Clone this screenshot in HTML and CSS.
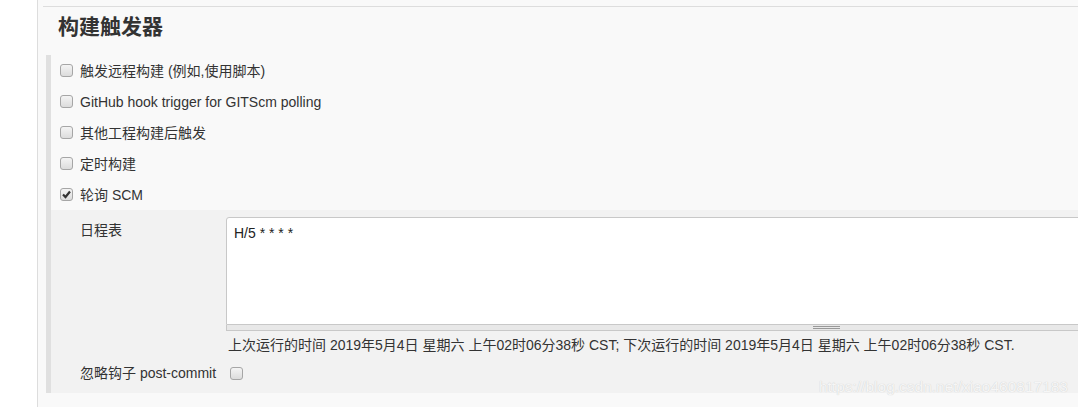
FILE: index.html
```
<!DOCTYPE html>
<html lang="zh-CN">
<head>
    <meta charset="UTF-8">
    <title>构建触发器</title>
    <link rel="stylesheet" href="styles.css">
</head>
<body>
    <div class="page">
        <div class="section-header">
            <h1>构建触发器</h1>
        </div>

        <div class="section-body">
            <div class="opt-row"><span class="cb"></span><span>触发远程构建 (例如,使用脚本)</span></div>
            <div class="opt-row"><span class="cb"></span><span>GitHub hook trigger for GITScm polling</span></div>
            <div class="opt-row"><span class="cb"></span><span>其他工程构建后触发</span></div>
            <div class="opt-row"><span class="cb"></span><span>定时构建</span></div>
            <div class="opt-row">
                <span class="cb">
                    <svg width="11" height="11" viewBox="0 0 11 11"><path d="M2 5.5 L4.5 8 L9 2.5" fill="none" stroke="#333" stroke-width="2.2"/></svg>
                </span>
                <span>轮询 SCM</span>
            </div>

            <div class="nested">
                <div class="field">
                    <div class="field-label">日程表</div>
                    <div class="field-value">
                        <div class="ta-wrap">
                            <textarea class="ta">H/5 * * * *</textarea>
                            <div class="ta-handle"><span class="grip"></span></div>
                        </div>
                        <div class="help">上次运行的时间 2019年5月4日 星期六 上午02时06分38秒 CST; 下次运行的时间 2019年5月4日 星期六 上午02时06分38秒 CST.</div>
                    </div>
                </div>
                <div class="field field-inline">
                    <div class="field-label">忽略钩子 post-commit</div>
                    <div class="field-value"><span class="cb"></span></div>
                </div>
            </div>
        </div>
    </div>

    <div class="watermark">https://blog.csdn.net/xiao460817183</div>
</body>
</html>
```

FILE: styles.css
```
body {
    font-family: 'Liberation Sans', 'Noto Sans CJK SC', sans-serif;
    font-size: 14px;
    color: #333;
    margin: 0;
    background: white;
    position: relative;
    height: 407px;
    overflow: hidden;
}
.page {
    margin-left: 37px;
    border-left: 1px solid #ddd;
    background: #f9f9f9;
    height: 407px;
    padding-left: 5px;
    padding-top: 6px;
    box-sizing: border-box;
    overflow: hidden;
}
.section-header {
    border-top: 1px solid #ddd;
}
.section-header h1 {
    margin: 0 0 13px 0;
    padding: 5px 0 0 15px;
    font-size: 21px;
    line-height: 30px;
    font-weight: bold;
    color: #333;
}
.section-body {
    margin-left: 3px;
    border-left: 5px solid #e0e0e0;
}
.opt-row {
    height: 31px;
    display: flex;
    align-items: center;
    padding-left: 9px;
    gap: 7px;
    line-height: 18px;
}
.cb {
    width: 13px;
    height: 13px;
    box-sizing: border-box;
    border: 1px solid #a6a6a6;
    border-radius: 3px;
    background: linear-gradient(#f4f4f4, #dcdcdc);
    display: inline-flex;
    align-items: center;
    justify-content: center;
    flex: none;
}
.cb svg {
    display: block;
}
.nested {
    background: #f2f2f2;
    padding-top: 7px;
    padding-bottom: 5px;
}
.field {
    display: flex;
}
.field-label {
    width: 175px;
    box-sizing: border-box;
    padding-left: 29px;
    padding-top: 4px;
    line-height: 18px;
    flex: none;
}
.field-value {
    flex: none;
}
.ta-wrap {
    width: 1200px;
}
.ta {
    display: block;
    width: 100%;
    height: 108px;
    box-sizing: border-box;
    margin: 0;
    padding: 6px 7px;
    border: 1px solid #c8c8c8;
    border-radius: 3px 3px 0 0;
    font-family: 'Liberation Sans', 'Noto Sans CJK SC', sans-serif;
    font-size: 14px;
    line-height: 18px;
    color: #222;
    background: white;
    resize: none;
    outline: none;
}
.ta-handle {
    height: 6px;
    box-sizing: border-box;
    background: #e8e8e8;
    border: 1px solid #c8c8c8;
    border-top: none;
    display: flex;
    justify-content: center;
    align-items: center;
}
.grip {
    width: 27px;
    height: 3px;
    box-sizing: border-box;
    border-top: 1px solid #999;
    border-bottom: 1px solid #999;
}
.help {
    margin-top: 4px;
    margin-bottom: 3px;
    padding-left: 2px;
    line-height: 20px;
    white-space: nowrap;
}
.field-inline {
    height: 30px;
    align-items: center;
}
.field-inline .field-label {
    padding-top: 0;
}
.field-inline .field-value {
    padding-left: 4px;
    display: flex;
}
.watermark {
    position: absolute;
    right: 10px;
    top: 378px;
    font-size: 15.5px;
    color: #f6f6f6;
    text-shadow: 0 0 1px #c4c4c4;
    white-space: nowrap;
}
```
